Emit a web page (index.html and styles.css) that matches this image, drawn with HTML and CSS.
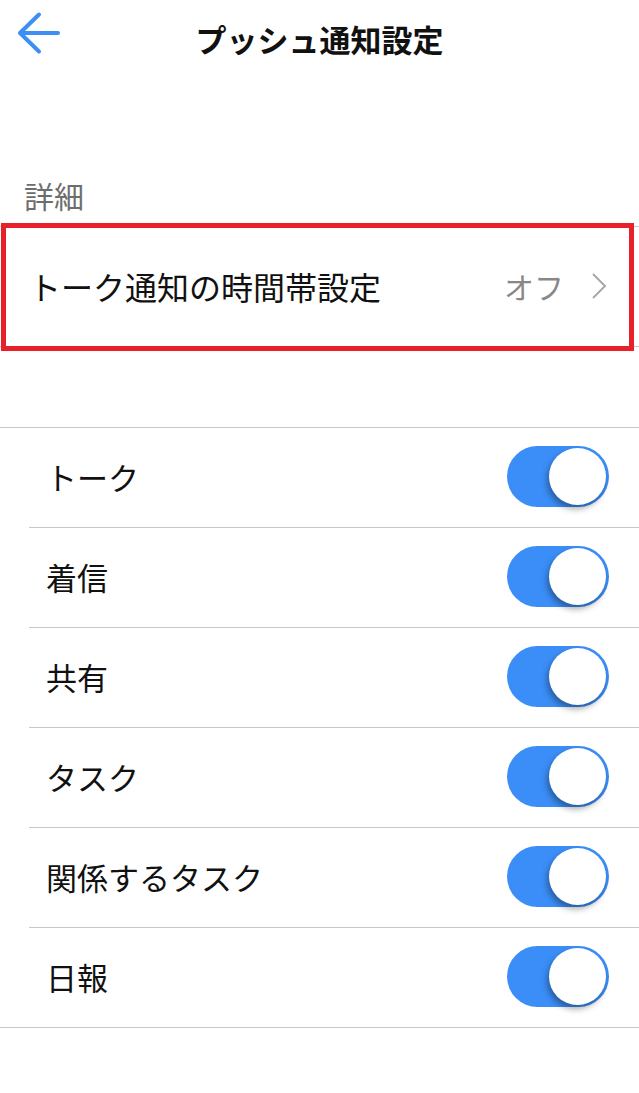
FILE: index.html
```html
<!DOCTYPE html>
<html lang="ja">
  <head>
    <meta charset="UTF-8">
    <meta name="viewport" content="width=device-width, initial-scale=1.0">
    <title>プッシュ通知設定</title>
    <link rel="stylesheet" href="styles.css">
  </head>
  <body>
    <header class="topbar">
      <a class="back" href="#">
        <svg width="44" height="44" viewBox="0 0 44 44">
          <path d="M41 22 H3 M22 3.5 L3 22 L22 40.5" fill="none" stroke="#3d8ff5" stroke-width="4" stroke-linecap="round" stroke-linejoin="round"/>
        </svg>
      </a>
      <h1 class="title">プッシュ通知設定</h1>
      <div></div>
    </header>

    <section class="detail">
      <h2 class="label">詳細</h2>
      <div class="group">
        <!-- 빨간 박스: 강조 표시 -->
        <div class="mark"></div>
        <div class="row link">
          <span class="name">トーク通知の時間帯設定</span>
          <span class="value">オフ</span>
          <svg class="chev" width="16" height="28" viewBox="0 0 16 28">
            <path d="M2 2 L14 14 L2 26" fill="none" stroke="#a8a8a8" stroke-width="2"/>
          </svg>
        </div>
      </div>
    </section>

    <section class="push">
      <ul class="list">
        <li class="item"><span>トーク</span><span class="toggle on"><i></i></span></li>
        <li class="item"><span>着信</span><span class="toggle on"><i></i></span></li>
        <li class="item"><span>共有</span><span class="toggle on"><i></i></span></li>
        <li class="item"><span>タスク</span><span class="toggle on"><i></i></span></li>
        <li class="item"><span>関係するタスク</span><span class="toggle on"><i></i></span></li>
        <li class="item"><span>日報</span><span class="toggle on"><i></i></span></li>
      </ul>
    </section>
  </body>
</html>
```

FILE: styles.css
```css
body {
  margin: 0;
  background: #fff;
  color: #111;
  font-family: "Noto Sans CJK JP", "Noto Sans", sans-serif;
}

.topbar {
  display: grid;
  grid-template-columns: 1fr auto 1fr;
  align-items: start;
  height: 82px;
}

.back {
  display: block;
  width: 44px;
  height: 44px;
  margin: 11px 0 0 17px;
}

.back svg {
  display: block;
}

.title {
  margin: 18px 0 0;
  font-size: 31px;
  line-height: 42px;
  font-weight: 700;
}

.label {
  margin: 91px 0 0;
  padding-left: 24px;
  font-size: 30px;
  line-height: 45px;
  font-weight: 400;
  color: #6d6d6d;
}

.group {
  position: relative;
  margin-top: 8px;
  border-top: 1px solid #c8c8cc;
  border-bottom: 1px solid #c8c8cc;
}

.mark {
  position: absolute;
  top: -4px;
  left: 1px;
  right: 5px;
  bottom: -5px;
  border: 5px solid #e8202a;
}

.row {
  display: flex;
  align-items: center;
  height: 117px;
  padding: 0 32px 2px 29px;
}

.row .name {
  flex: 1;
  font-size: 32px;
}

.row .value {
  font-size: 30px;
  color: #888;
  margin-right: 27px;
}

.chev {
  display: block;
}

.push {
  margin-top: 80px;
}

.list {
  margin: 0;
  padding: 0;
  list-style: none;
  border-top: 1px solid #c8c8cc;
  border-bottom: 1px solid #c8c8cc;
}

.item {
  display: flex;
  align-items: center;
  justify-content: space-between;
  height: 96px;
  margin-left: 29px;
  padding: 0 30px 3px 17px;
  font-size: 31px;
  border-bottom: 1px solid #c8c8cc;
}

.item:last-child {
  border-bottom: none;
}

.toggle {
  position: relative;
  display: block;
  width: 102px;
  height: 61px;
  border-radius: 31px;
  background: #ddd;
}

.toggle.on {
  background: #3b8ef7;
}

.toggle i {
  position: absolute;
  top: 2px;
  right: 3px;
  width: 57px;
  height: 57px;
  border-radius: 50%;
  background: #fff;
  box-shadow: -2px 4px 6px rgba(0, 0, 0, 0.35);
}
```
